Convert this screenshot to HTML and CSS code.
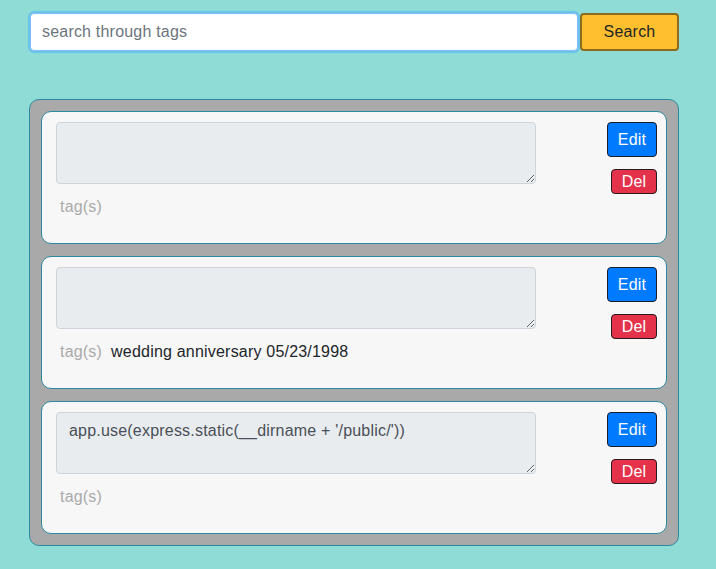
FILE: index.html
```html
<!DOCTYPE html>
<html>
<head>
<meta charset="utf-8">
<link rel="stylesheet" href="styles.css">
</head>
<body>
<form class="search">
  <input class="search-input" type="text" placeholder="search through tags">
  <button class="btn btn-search" type="button">Search</button>
</form>
<div class="list">
  <div class="card">
    <div class="main">
      <textarea class="note"></textarea>
      <div class="tags"><span class="tag-label">tag(s)</span></div>
    </div>
    <div class="actions">
      <button class="btn btn-edit" type="button">Edit</button>
      <button class="btn btn-del" type="button">Del</button>
    </div>
  </div>
  <div class="card">
    <div class="main">
      <textarea class="note"></textarea>
      <div class="tags"><span class="tag-label">tag(s)</span><span class="tag-text">wedding anniversary 05/23/1998</span></div>
    </div>
    <div class="actions">
      <button class="btn btn-edit" type="button">Edit</button>
      <button class="btn btn-del" type="button">Del</button>
    </div>
  </div>
  <div class="card">
    <div class="main">
      <textarea class="note">app.use(express.static(__dirname + '/public/'))</textarea>
      <div class="tags"><span class="tag-label">tag(s)</span></div>
    </div>
    <div class="actions">
      <button class="btn btn-edit" type="button">Edit</button>
      <button class="btn btn-del" type="button">Del</button>
    </div>
  </div>
</div>
</body>
</html>
```
FILE: styles.css
```css
html, body {
  margin: 0;
  padding: 0;
}
body {
  background: #8fdbd5;
  font-family: "Liberation Sans", Arial, sans-serif;
  font-size: 16px;
  letter-spacing: 0.2px;
  color: #212529;
  width: 716px;
  height: 569px;
  overflow: hidden;
}
.search {
  display: flex;
  align-items: center;
  gap: 2px;
  padding: 13px 0 0 30px;
  margin: 0;
}
.search-input {
  box-sizing: border-box;
  width: 548px;
  height: 38px;
  margin: 0;
  padding: 6px 11px;
  border: 1px solid #80bdff;
  border-radius: 4px;
  background: #fff;
  font-family: inherit;
  font-size: 16px;
  letter-spacing: 0.2px;
  color: #495057;
  box-shadow: 0 0 0 2px #6cc3ea;
  outline: none;
}
.search-input::placeholder {
  color: #6c757d;
}
.btn {
  box-sizing: border-box;
  margin: 0;
  font-family: inherit;
  font-size: 16px;
  letter-spacing: 0.2px;
  line-height: 24px;
  border-radius: 4px;
  cursor: pointer;
}
.btn-search {
  width: 99px;
  height: 38px;
  padding: 0;
  background: #ffbf2e;
  border: 2px solid #8c6b1c;
  color: #212529;
}
.list {
  box-sizing: border-box;
  margin: 48px 0 0 29px;
  width: 650px;
  padding: 11px;
  background: #a9a9a9;
  border: 1px solid #2b8aa2;
  border-radius: 10px;
  display: flex;
  flex-direction: column;
  gap: 12px;
}
.card {
  box-sizing: border-box;
  height: 133px;
  display: flex;
  padding: 10px 9px 0 14px;
  background: #f7f7f7;
  border: 1px solid #2b8aa2;
  border-radius: 10px;
}
.main {
  width: 480px;
}
.note {
  display: block;
  box-sizing: border-box;
  width: 480px;
  height: 62px;
  margin: 0;
  padding: 6px 12px;
  background: #e9ecef;
  border: 1px solid #ced4da;
  border-radius: 4px;
  font-family: inherit;
  font-size: 16px;
  letter-spacing: 0.2px;
  line-height: 24px;
  color: #495057;
  resize: vertical;
}
.tags {
  display: flex;
  gap: 9px;
  margin-top: 11px;
  padding-left: 4px;
  line-height: 24px;
}
.tag-label {
  color: #aaaaaa;
}
.tag-text {
  color: #212529;
}
.actions {
  margin-left: auto;
  display: flex;
  flex-direction: column;
  align-items: flex-end;
  gap: 12px;
}
.btn-edit {
  width: 50px;
  height: 35px;
  padding: 0;
  background: #007bff;
  border: 1px solid #1c1c2a;
  color: #fff;
}
.btn-del {
  width: 46px;
  height: 25px;
  padding: 0;
  line-height: 22px;
  background: #e3324a;
  border: 1px solid #2a1a1c;
  color: #fff;
}
```
